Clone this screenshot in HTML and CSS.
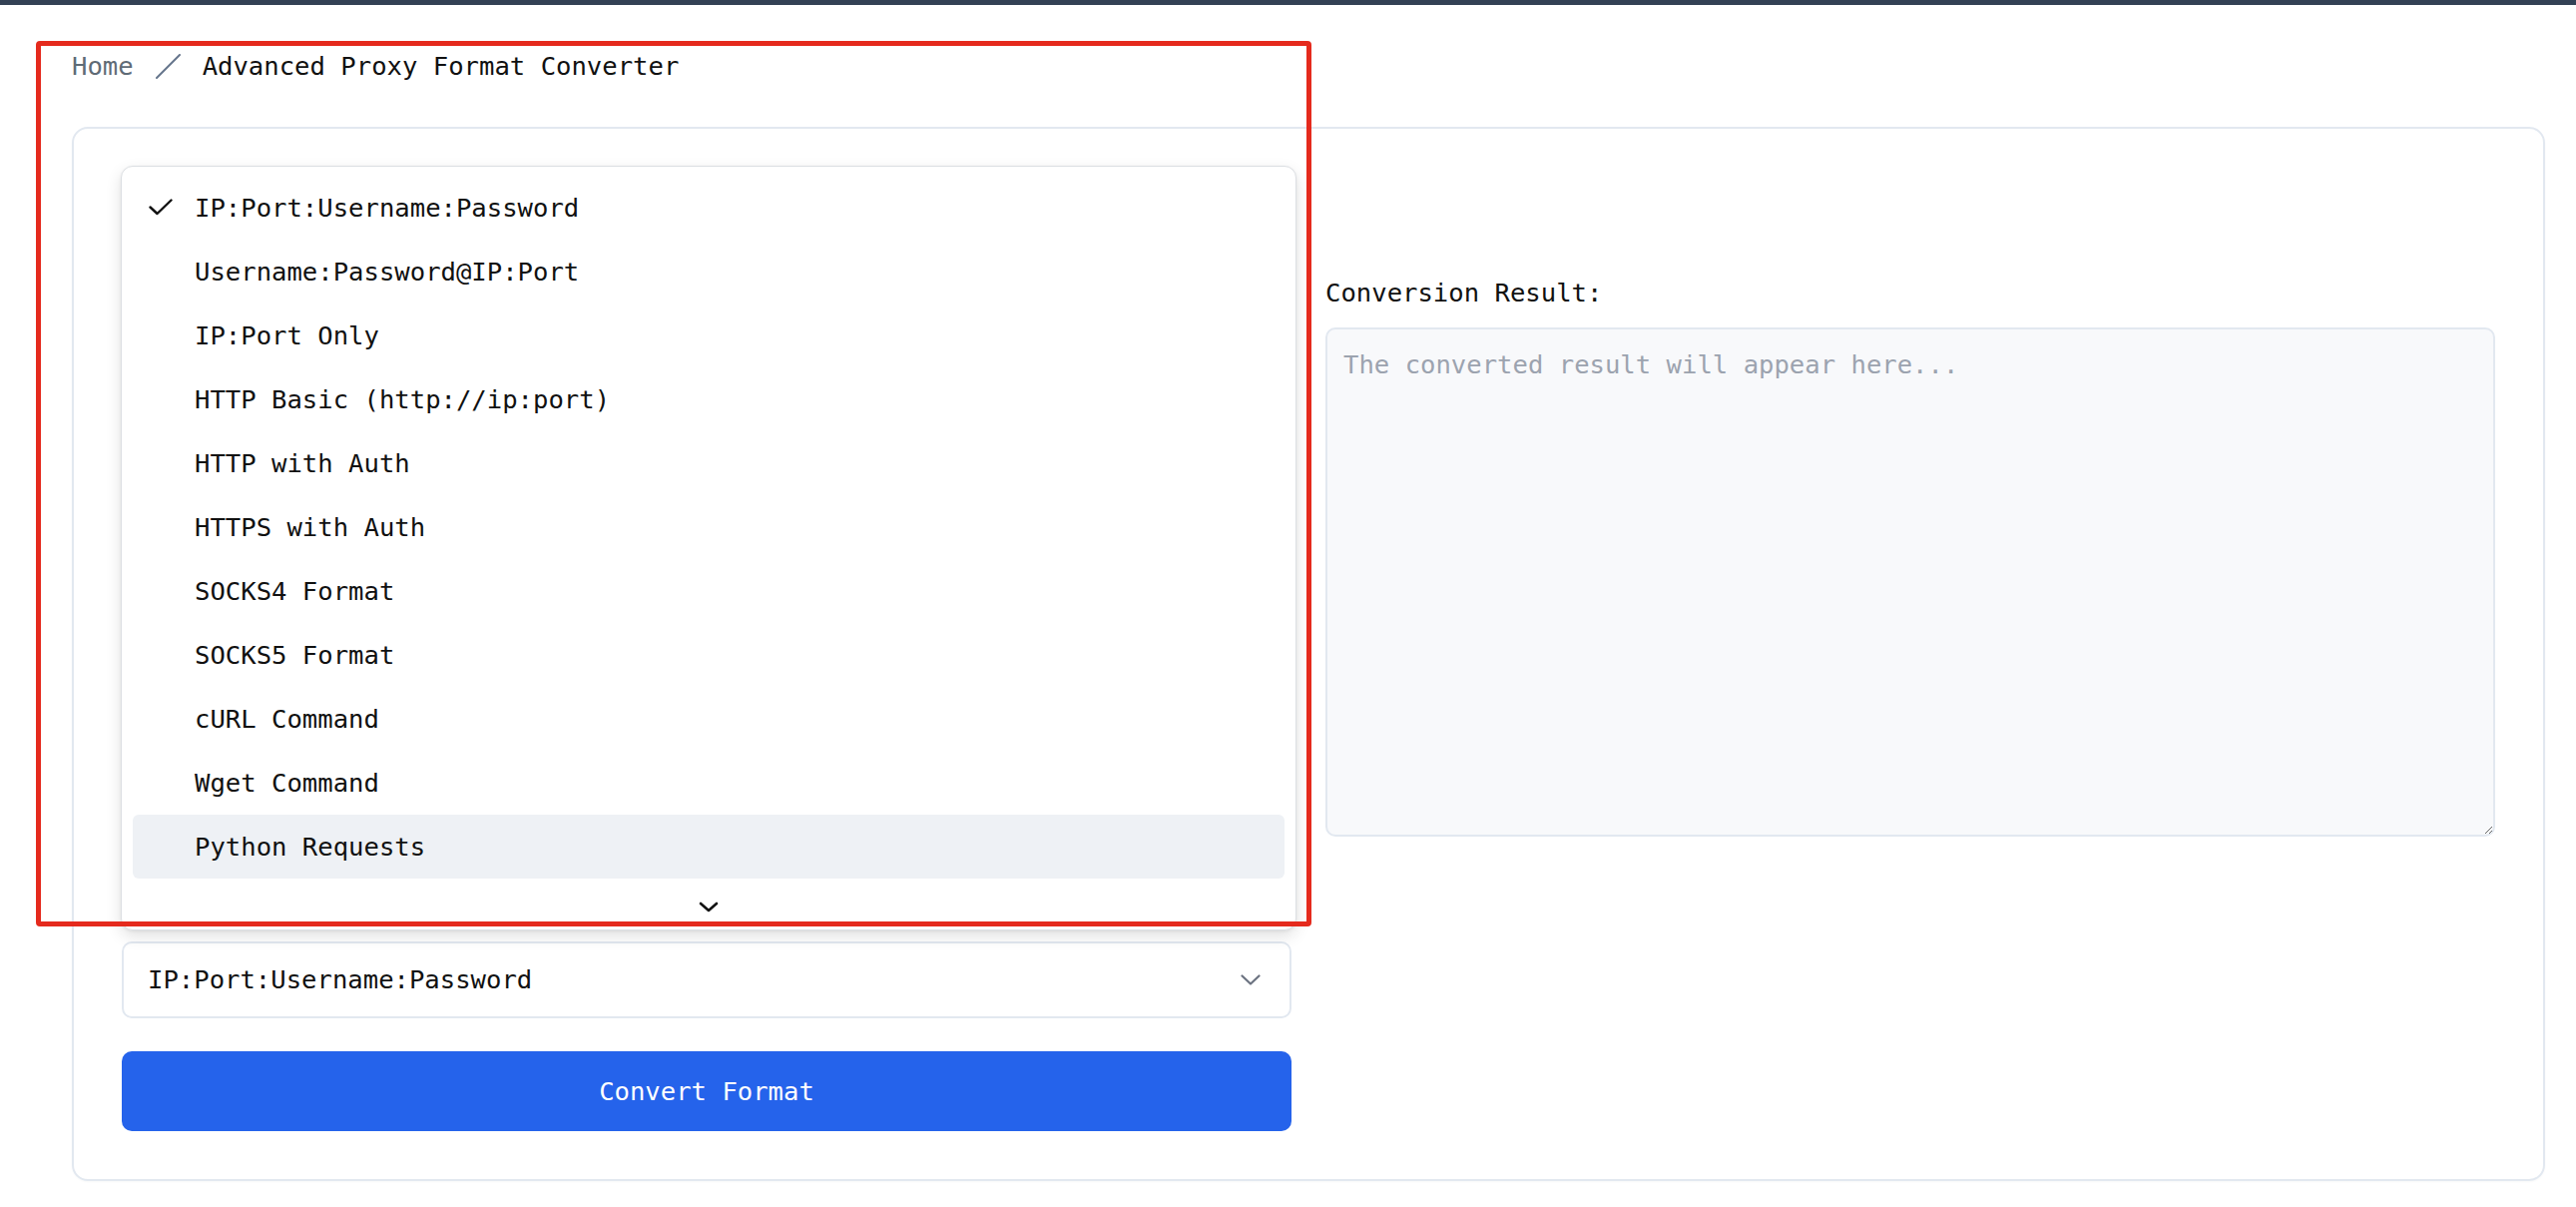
FILE: index.html
```html
<!DOCTYPE html>
<html lang="en">
<head>
<meta charset="utf-8">
<title>Advanced Proxy Format Converter</title>
<link rel="stylesheet" href="styles.css">
</head>
<body>
<div class="topbar"></div>
<main class="page">
  <nav class="breadcrumb">
    <span class="crumb-home">Home</span>
    <svg class="crumb-sep" width="25" height="25" viewBox="0 0 25 25"><line x1="1" y1="24" x2="24" y2="1" stroke="#64748b" stroke-width="2" stroke-linecap="round"/></svg>
    <span class="crumb-current">Advanced Proxy Format Converter</span>
  </nav>

  <section class="card">
    <div class="col col-left">
      <textarea class="input-area" aria-label="Input proxies"></textarea>
      <div class="select" aria-label="Target format">
        <span>IP:Port:Username:Password</span>
        <svg width="20" height="11" viewBox="0 0 20 11"><polyline points="1.5,1.5 10,9.5 18.5,1.5" fill="none" stroke="#6b7280" stroke-width="2.2" stroke-linecap="round" stroke-linejoin="round"/></svg>
      </div>
      <button class="convert-btn" type="button">Convert Format</button>

      <div class="menu">
        <ul class="menu-list">
          <li class="menu-item is-selected">
            <svg class="check" width="24" height="17" viewBox="0 0 24 17"><polyline points="1.5,8.5 8.5,15 22.5,1.5" fill="none" stroke="#111" stroke-width="2.4" stroke-linecap="round" stroke-linejoin="round"/></svg>
            IP:Port:Username:Password
          </li>
          <li class="menu-item">Username:Password@IP:Port</li>
          <li class="menu-item">IP:Port Only</li>
          <li class="menu-item">HTTP Basic (http://ip:port)</li>
          <li class="menu-item">HTTP with Auth</li>
          <li class="menu-item">HTTPS with Auth</li>
          <li class="menu-item">SOCKS4 Format</li>
          <li class="menu-item">SOCKS5 Format</li>
          <li class="menu-item">cURL Command</li>
          <li class="menu-item">Wget Command</li>
          <li class="menu-item is-hover">Python Requests</li>
        </ul>
        <div class="menu-scroll">
          <svg width="20" height="11" viewBox="0 0 20 11"><polyline points="2,2 10,9 18,2" fill="none" stroke="#111" stroke-width="2.6" stroke-linecap="round" stroke-linejoin="round"/></svg>
        </div>
      </div>
    </div>

    <div class="col col-right">
      <label class="field-label">Conversion Result:</label>
      <textarea class="result-area" placeholder="The converted result will appear here..." readonly></textarea>
    </div>
  </section>
</main>
<div class="annotation"></div>
</body>
</html>
```

FILE: styles.css
```css
* {
  box-sizing: border-box;
}

html, body {
  margin: 0;
  padding: 0;
  background: #ffffff;
}

body {
  font-family: "DejaVu Sans Mono", "Liberation Mono", monospace;
  font-size: 25.6px;
  line-height: 38.4px;
  color: #111111;
  position: relative;
  min-height: 1209px;
}

.topbar {
  height: 5px;
  background: #334155;
}

.page {
  padding: 42px 31px 0 72px;
}

.breadcrumb {
  display: flex;
  align-items: center;
  gap: 22px;
  height: 38px;
  margin-bottom: 42px;
}

.crumb-home {
  color: #5f6b76;
}

.crumb-sep {
  display: block;
}

.crumb-current {
  color: #111111;
}

.card {
  border: 2px solid #e2e8f0;
  border-radius: 16px;
  padding: 48px;
  display: grid;
  grid-template-columns: 1fr 1fr;
  column-gap: 34px;
  align-items: start;
  box-shadow: 0 1px 2px rgba(15, 23, 42, 0.03);
}

.col {
  display: flex;
  flex-direction: column;
  min-width: 0;
}

.col-left {
  position: relative;
}

.col-right {
  padding-top: 97px;
}

.field-label {
  display: block;
  margin-bottom: 16px;
  color: #111111;
}

.input-area {
  height: 734px;
  margin-bottom: 32px;
  border: 2px solid #e2e8f0;
  border-radius: 10px;
  padding: 16px;
  font: inherit;
  resize: vertical;
}

.result-area {
  width: 100%;
  height: 510px;
  border: 2px solid #e2e8f0;
  border-radius: 10px;
  background: #f8f9fb;
  padding: 16px;
  font-family: inherit;
  font-size: 25.6px;
  line-height: 38.4px;
  color: #111111;
  resize: vertical;
  outline: none;
}

.result-area::placeholder {
  color: #9ca3af;
}

.select {
  height: 77px;
  border: 2px solid #e2e8f0;
  border-radius: 10px;
  background: #ffffff;
  display: flex;
  align-items: center;
  justify-content: space-between;
  padding: 0 29px 0 24px;
  color: #111111;
  margin-bottom: 33px;
}

.select svg {
  display: block;
}

.convert-btn {
  height: 80px;
  border: none;
  border-radius: 10px;
  background: #2563eb;
  color: #ffffff;
  font-family: inherit;
  font-size: 25.6px;
  line-height: 38.4px;
  cursor: pointer;
}

/* open select popup */
.menu {
  position: absolute;
  top: -11px;
  left: -1px;
  right: -5px;
  height: 766px;
  background: #ffffff;
  border: 1px solid #dcdfe3;
  border-radius: 12px;
  box-shadow: 0 6px 16px rgba(0, 0, 0, 0.12), 0 1px 3px rgba(0, 0, 0, 0.06);
  z-index: 5;
  display: flex;
  flex-direction: column;
}

.menu-list {
  list-style: none;
  margin: 0;
  padding: 9px 11px 0 11px;
}

.menu-item {
  position: relative;
  height: 64px;
  line-height: 64px;
  padding-left: 62px;
  border-radius: 6px;
  color: #111111;
  white-space: nowrap;
}

.menu-item.is-hover {
  background: #eef1f5;
}

.check {
  position: absolute;
  left: 16px;
  top: 23px;
  display: block;
}

.menu-scroll {
  flex: 1;
  display: flex;
  align-items: center;
  justify-content: center;
  padding-top: 5px;
}

.menu-scroll svg {
  display: block;
}

/* red highlight annotation drawn over the screenshot */
.annotation {
  position: absolute;
  left: 36px;
  top: 41px;
  width: 1278px;
  height: 887px;
  border: 5px solid #e52a1d;
  border-radius: 4px;
  pointer-events: none;
  z-index: 10;
}
```
